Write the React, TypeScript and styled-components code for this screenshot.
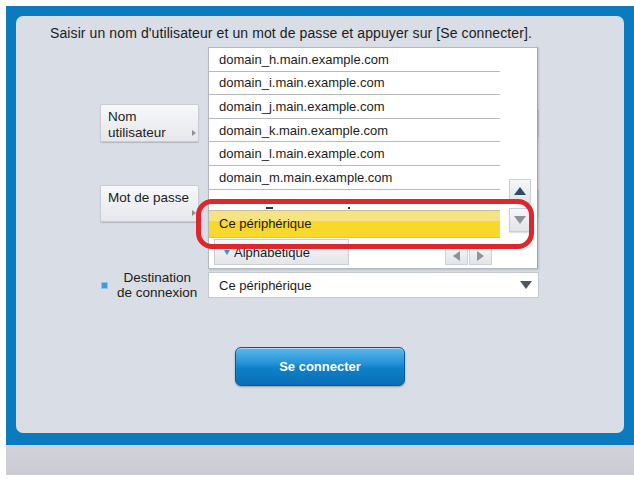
import styled, { createGlobalStyle } from 'styled-components'

const GlobalStyle = createGlobalStyle`
    body {
        margin: 0;
        background: #ffffff;
        font-family: "Liberation Sans", Arial, sans-serif;
        color: #1c1c1c;
    }
`

const Screen = styled.div`
    width: 634px;
    padding: 6px 0 0 6px;
    box-sizing: border-box;
`

const Frame = styled.div`
    background: #0b7bc0;
    padding: 10px 10px 12px 10px;
`

const Panel = styled.div`
    position: relative;
    height: 417px;
    box-sizing: border-box;
    padding-top: 9px;
    background: #d9dde5;
    border-radius: 7px;
`

const Heading = styled.p`
    margin: 0 0 0 34px;
    font-size: 14px;
    line-height: 16px;
    letter-spacing: 0.1px;
    white-space: nowrap;
`

const Form = styled.div`
    display: flex;
    flex-direction: column;
    margin: 63px 0 0 84px;
`

const FieldRow = styled.div<{ $top?: number; $height: number }>`
    display: grid;
    grid-template-columns: 99px 331px;
    column-gap: 9px;
    align-items: center;
    height: ${(p) => p.$height}px;
    margin-top: ${(p) => p.$top ?? 0}px;
`

const KeyButton = styled.div`
    height: 100%;
    box-sizing: border-box;
    display: flex;
    justify-content: space-between;
    align-items: flex-end;
    padding: 4px 2px 0 7px;
    background: linear-gradient(#f7f8fa, #e5e7ec);
    border: 1px solid #c8ccd3;
    border-radius: 2px;
    box-shadow: 0 1px 1px rgba(0, 0, 0, 0.18);
    font-size: 13.5px;
    line-height: 16px;
`

const KeyLabel = styled.span`
    align-self: flex-start;
    white-space: nowrap;
`

const KeyArrow = styled.span`
    flex: none;
    width: 0;
    height: 0;
    margin-bottom: 5px;
    border-top: 3px solid transparent;
    border-bottom: 3px solid transparent;
    border-left: 4px solid #8c9198;
`

const InputField = styled.div`
    height: 27px;
    background: #ffffff;
    border: 1px solid #c3c7ce;
    box-sizing: border-box;
`

const DestLabel = styled.div`
    display: flex;
    align-items: center;
    font-size: 13.5px;
    line-height: 15px;
`

const Bullet = styled.span`
    width: 5px;
    height: 5px;
    flex: none;
    background: #3a9de0;
    border: 1px solid #8cc6ee;
    margin: 0 9px 0 1px;
`

const DestText = styled.span`
    text-align: center;
    white-space: nowrap;
`

const Select = styled.div`
    height: 26px;
    box-sizing: border-box;
    display: flex;
    align-items: center;
    justify-content: space-between;
    padding: 0 6px 0 10px;
    background: #ffffff;
    border: 1px solid #c3c7ce;
    font-size: 13px;
`

const Caret = styled.span<{ $color: string; $up?: boolean }>`
    width: 0;
    height: 0;
    border-left: 6px solid transparent;
    border-right: 6px solid transparent;
    ${(p) =>
        p.$up
            ? `border-bottom: 8px solid ${p.$color};`
            : `border-top: 8px solid ${p.$color};`}
`

const ConnectWrap = styled.div`
    display: flex;
    justify-content: center;
    margin-top: 47px;
`

const ConnectButton = styled.button`
    width: 170px;
    height: 39px;
    border: 1px solid #0b5a93;
    border-radius: 6px;
    background: linear-gradient(
        #5cb6ea 0%,
        #2795d8 40%,
        #0d80c9 55%,
        #0a6fb5 100%
    );
    box-shadow: inset 0 1px 0 rgba(255, 255, 255, 0.45),
        0 1px 2px rgba(0, 0, 0, 0.3);
    color: #ffffff;
    font-family: "Liberation Sans", Arial, sans-serif;
    font-size: 13px;
    font-weight: bold;
`

/* dropdown list lying over the form */
const Dropdown = styled.div`
    position: absolute;
    left: 192px;
    top: 31px;
    width: 330px;
    height: 222px;
    box-sizing: border-box;
    display: flex;
    background: #ffffff;
    border: 1px solid #b3b7be;
    border-right-color: #9ea2aa;
    box-shadow: 1px 1px 2px rgba(0, 0, 0, 0.15);
`

const ListCol = styled.div`
    width: 291px;
    display: flex;
    flex-direction: column;
`

const DomainItem = styled.div`
    height: 22.6px;
    flex: none;
    display: flex;
    align-items: center;
    padding-left: 10px;
    border-bottom: 1px solid #b6b9bf;
    font-size: 13px;
`

const GapRow = styled.div`
    height: 20px;
    flex: none;
    display: flex;
    align-items: flex-end;
    gap: 75px;
    padding: 0 0 1px 57px;
    box-sizing: border-box;
`

const Dash = styled.span<{ $width: number }>`
    width: ${(p) => p.$width}px;
    height: 2px;
    background: #333;
`

const SelectedItem = styled.div`
    height: 28px;
    flex: none;
    box-sizing: border-box;
    display: flex;
    align-items: center;
    padding-left: 10px;
    border-top: 1px solid #c7c09f;
    border-bottom: 1px solid #c7c09f;
    background: linear-gradient(#f8e384 0%, #f8e384 38%, #f8d82a 38%, #f8d82a 100%);
    font-size: 13px;
`

const ListFooter = styled.div`
    flex: 1;
    display: flex;
    align-items: flex-end;
    padding: 0 0 3px 5px;
`

const SortButton = styled.div`
    width: 135px;
    height: 26px;
    box-sizing: border-box;
    display: flex;
    align-items: center;
    gap: 4px;
    padding-left: 9px;
    background: linear-gradient(#f6f7f9, #e3e5ea);
    border: 1px solid #c8ccd3;
    font-size: 13px;
`

const SortMark = styled.span`
    width: 0;
    height: 0;
    border-left: 3px solid transparent;
    border-right: 3px solid transparent;
    border-top: 5px solid #3a8fd0;
`

const PageArrows = styled.div`
    display: flex;
    gap: 1px;
    margin-left: auto;
    margin-right: 8px;
`

const PageArrow = styled.div`
    width: 23px;
    height: 19px;
    box-sizing: border-box;
    display: flex;
    align-items: center;
    justify-content: center;
    background: linear-gradient(#f4f5f7, #e2e4e8);
    border: 1px solid #cdd0d6;
`

const Tri = styled.span<{ $left?: boolean }>`
    width: 0;
    height: 0;
    border-top: 5px solid transparent;
    border-bottom: 5px solid transparent;
    ${(p) => (p.$left ? 'border-right: 7px solid #8c939b;' : 'border-left: 7px solid #8c939b;')}
`

const ScrollCol = styled.div`
    display: flex;
    flex-direction: column;
    gap: 5px;
    padding: 131px 0 0 9px;
`

const ScrollButton = styled.div`
    width: 22px;
    height: 24px;
    box-sizing: border-box;
    display: flex;
    align-items: center;
    justify-content: center;
    background: linear-gradient(#f6f7f9, #e1e3e8);
    border: 1px solid #cbced5;
    box-shadow: 0 1px 1px rgba(0, 0, 0, 0.12);
`

/* red annotation ring */
const Highlight = styled.div`
    position: absolute;
    left: 180px;
    top: 183px;
    width: 338px;
    height: 50px;
    box-sizing: border-box;
    border: 5px solid #e0262d;
    border-radius: 16px;
`

const BottomBar = styled.div`
    height: 30px;
    background: linear-gradient(#d2d3da, #cacbd3);
`

const domains = ['h', 'i', 'j', 'k', 'l', 'm']

const App = () => {
    return (
        <Screen>
            <GlobalStyle />
            <Frame>
                <Panel>
                    <Heading>
                        Saisir un nom d'utilisateur et un mot de passe et appuyer sur [Se connecter].
                    </Heading>
                    <Form>
                        <FieldRow $height={36}>
                            <KeyButton>
                                <KeyLabel>
                                    Nom
                                    <br />
                                    utilisateur
                                </KeyLabel>
                                <KeyArrow />
                            </KeyButton>
                            <InputField />
                        </FieldRow>
                        <FieldRow $top={45} $height={37}>
                            <KeyButton>
                                <KeyLabel>Mot de passe</KeyLabel>
                                <KeyArrow />
                            </KeyButton>
                            <InputField />
                        </FieldRow>
                        <FieldRow $top={48} $height={30}>
                            <DestLabel>
                                <Bullet />
                                <DestText>
                                    Destination
                                    <br />
                                    de connexion
                                </DestText>
                            </DestLabel>
                            <Select>
                                Ce périphérique
                                <Caret $color='#4f565e' />
                            </Select>
                        </FieldRow>
                    </Form>
                    <ConnectWrap>
                        <ConnectButton>Se connecter</ConnectButton>
                    </ConnectWrap>

                    <Dropdown>
                        <ListCol>
                            {domains.map((d) => (
                                <DomainItem key={d}>domain_{d}.main.example.com</DomainItem>
                            ))}
                            <GapRow>
                                <Dash $width={7} />
                                <Dash $width={2} />
                            </GapRow>
                            <SelectedItem>Ce périphérique</SelectedItem>
                            <ListFooter>
                                <SortButton>
                                    <SortMark />
                                    Alphabétique
                                </SortButton>
                                <PageArrows>
                                    <PageArrow>
                                        <Tri $left />
                                    </PageArrow>
                                    <PageArrow>
                                        <Tri />
                                    </PageArrow>
                                </PageArrows>
                            </ListFooter>
                        </ListCol>
                        <ScrollCol>
                            <ScrollButton>
                                <Caret $color='#2d4a66' $up />
                            </ScrollButton>
                            <ScrollButton>
                                <Caret $color='#8d939b' />
                            </ScrollButton>
                        </ScrollCol>
                    </Dropdown>
                    <Highlight />
                </Panel>
            </Frame>
            <BottomBar />
        </Screen>
    )
}

export default App
